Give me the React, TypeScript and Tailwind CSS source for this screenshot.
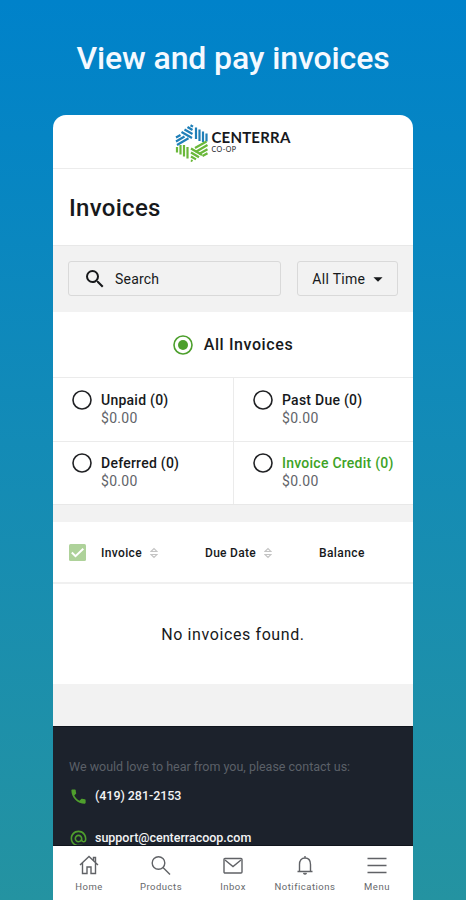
import React from 'react';
import type { ReactNode } from 'react';
import { MdAlternateEmail, MdArrowDropDown, MdPhone, MdSearch } from 'react-icons/md';

const filters = [
    { label: 'Unpaid (0)', amount: '$0.00', credit: false },
    { label: 'Past Due (0)', amount: '$0.00', credit: false },
    { label: 'Deferred (0)', amount: '$0.00', credit: false },
    { label: 'Invoice Credit (0)', amount: '$0.00', credit: true },
];

function Logo() {
    return (
        <div className="flex items-center">
            <svg width="34" height="38" viewBox="0 0 34 38" fill="none" strokeWidth="2.200">
                <g stroke="#1f7fb8">
                    {/* Top */}
                    <path d="M6.500 8L17 14M9.500 5.500L17.500 10M12.500 3L17.500 6M15.500 1.200L18 2.600" />
                    {/* Upper right */}
                    <path d="M21 3.500V15M24.500 5.500V17M28 7.500V18M31.500 9.500V17.500" />
                    {/* Upper left */}
                    <path d="M1 13.500L5.500 11M1 17.500L9.500 12.500M2 21L13.500 14.300" />
                </g>
                <g stroke="#6ab83a">
                    <path d="M2 23V28.500M5.500 21V30.500M9 21V32.500M12.500 23V34.500" />
                    <path d="M20 24L31.500 17.500M20.500 28L32.500 21M24 30L32.500 25.200M27.500 32L32.500 29.200" />
                    <path d="M16 24.500L27 31M16 28.500L24 33.200M16 32.500L21 35.400M16 36.300L17.500 37.200" />
                </g>
            </svg>
            <div className="ml-[2px] flex flex-col font-['Lato',sans-serif] text-[#17191d]">
                <span className="text-[15px] font-bold leading-[18px] tracking-[0.2px]">CENTERRA</span>
                <span className="-mt-px mb-[3px] text-[7px] leading-[9px] tracking-[0.5px]">CO-OP</span>
            </div>
        </div>
    );
}

function Radio({ checked = false }: { checked?: boolean }) {
    return (
        <svg width="20" height="20" viewBox="0 0 20 20" fill="none" className="shrink-0">
            <circle cx="10" cy="10" r="9" stroke={checked ? '#4c9f2c' : '#202124'} strokeWidth="1.6" />
            {checked && <circle cx="10" cy="10" r="5" fill="#4c9f2c" />}
        </svg>
    );
}

function SortIcon() {
    return (
        <svg width="8" height="12" viewBox="0 0 8 12" fill="none" stroke="#c4c4c4" strokeWidth="1.200">
            <path d="M1 4.500L4 1.500L7 4.500ZM1 7.500L4 10.500L7 7.500Z" />
        </svg>
    );
}

function NavItem({ label, children }: { label: string; children: ReactNode }) {
    return (
        <a className="flex w-[72px] flex-col items-center">
            <svg width="22" height="22" viewBox="0 0 22 22" fill="none" stroke="#606266" strokeWidth="1.400">
                {children}
            </svg>
            <span className="mt-1 text-[9.5px] leading-[14px] tracking-[0.5px] text-[#66686b]">{label}</span>
        </a>
    );
}

export default function App() {
    return (
        <div className="flex h-[900px] w-[466px] flex-col items-center overflow-hidden bg-linear-to-b from-[#0082ca] to-[#2493a1] font-['Roboto',sans-serif] text-[#17191b]">
            <h1 className="flex h-[115px] shrink-0 items-center whitespace-nowrap text-[32px] font-medium tracking-[-0.12px] text-[#f4f9ff]">
                View and pay invoices
            </h1>

            <main className="flex h-[785px] w-[360px] flex-col overflow-hidden rounded-t-[13px] bg-white">
                <header className="flex h-[54px] shrink-0 items-center justify-center border-b border-[#ececec] pt-0.5">
                    <Logo />
                </header>

                <div className="flex h-[76px] shrink-0 items-center px-4 pt-0.5">
                    <h2 className="text-2xl font-medium tracking-[0.3px]">Invoices</h2>
                </div>

                {/* Search and period */}
                <div className="flex h-[67px] shrink-0 gap-4 border-t border-[#e8e8e8] bg-[#f2f2f2] px-[15px] pt-[15px]">
                    <div className="flex h-[35px] w-[214px] items-center rounded-[3px] border border-[#d9d9d9] pl-[14px] text-sm tracking-[0.2px]">
                        <MdSearch className="mr-2 size-6" />
                        Search
                    </div>
                    <button className="flex h-[35px] w-[101px] items-center rounded-[3px] border border-[#d9d9d9] pl-[14px] text-sm tracking-[0.3px]">
                        All Time
                        <MdArrowDropDown className="ml-[2px] size-[22px]" />
                    </button>
                </div>

                <div className="flex h-[65px] shrink-0 items-center justify-center gap-[11px] text-base font-medium tracking-[0.6px]">
                    <Radio checked />
                    All Invoices
                </div>

                <div className="grid shrink-0 grid-cols-[181px_179px] grid-rows-[64px_63px]">
                    {filters.map((filter, index) => (
                        <div
                            key={filter.label}
                            className={`flex border-t border-[#ebebeb] pl-[19px] ${index % 2 === 0 ? 'border-r' : ''} ${index < 2 ? 'pt-3' : 'pt-[11px]'}`}
                        >
                            <Radio />
                            <div className="ml-[9px] whitespace-nowrap">
                                <p className={`text-sm font-medium leading-5 tracking-[0.25px] ${filter.credit ? 'text-[#3da326]' : ''}`}>
                                    {filter.label}
                                </p>
                                <p className="text-sm leading-[17px] tracking-[0.3px] text-[#626469]">{filter.amount}</p>
                            </div>
                        </div>
                    ))}
                </div>
                <div className="h-[18px] shrink-0 border-t border-[#e8e8e8] bg-[#f2f2f2]" />

                {/* Invoice table */}
                <div className="flex h-[62px] shrink-0 items-center border-b-2 border-[#f0f0f0] pl-4 pt-px text-xs font-medium">
                    <svg width="17" height="17" viewBox="0 0 17 17" fill="none">
                        <rect width="17" height="17" rx="1.500" fill="#aed29a" />
                        <path d="M2.800 8.500L6.500 12.200L14.300 4.700" stroke="white" strokeWidth="2" />
                    </svg>
                    <div className="ml-[15px] flex w-[104px] items-center gap-2 tracking-[0.35px]">Invoice <SortIcon /></div>
                    <div className="flex w-[114px] items-center gap-2 tracking-[0.3px]">Due Date <SortIcon /></div>
                    <div className="tracking-[0.4px]">Balance</div>
                </div>
                <p className="flex h-[100px] shrink-0 items-center justify-center pt-0.5 text-base tracking-[0.6px]">
                    No invoices found.
                </p>
                <div className="h-[42px] shrink-0 bg-[#f2f2f2]" />

                {/* Contact */}
                <footer className="h-[120px] shrink-0 overflow-hidden border-y border-[#10151d] bg-[#1c222c] px-4 pt-8">
                    <p className="whitespace-nowrap text-[12.5px] leading-4 text-[#5b6068]">
                        We would love to hear from you, please contact us:
                    </p>
                    <div className="mt-3 flex h-[18px] items-center gap-[7px] text-[12.5px] font-medium tracking-[-0.05px] text-[#f2f3f4]">
                        <MdPhone className="size-[19px] text-[#4f9f2d]" />
                        (419) 281-2153
                    </div>
                    <div className="mt-6 flex h-[18px] items-center gap-[7px] text-[12.5px] font-medium tracking-[-0.02px] text-[#f2f3f4]">
                        <MdAlternateEmail className="size-[19px] text-[#4f9f2d]" />
                        support@centerracoop.com
                    </div>
                </footer>

                <nav className="flex h-[54px] shrink-0 pt-2">
                    <NavItem label="Home">
                        <path d="M2 11L11 2.500L20 11M4.500 9V19.500H9V13H13V19.500H17.500V9M15.500 6.500V3.500H17.500V8.500" />
                    </NavItem>
                    <NavItem label="Products">
                        <circle cx="8.500" cy="9" r="6.300" />
                        <path d="M13 13.500L20 20.500" />
                    </NavItem>
                    <NavItem label="Inbox">
                        <rect x="2" y="4.500" width="18" height="14.500" rx="1" />
                        <path d="M3 6L11 12.500L19 6" />
                    </NavItem>
                    <NavItem label="Notifications">
                        <path d="M3.500 17.500H18.500M5.500 17.500V10.500C5.500 6.500 7.500 4 11 4S16.500 6.500 16.500 10.500V17.500M11 4V2M9.500 19Q11 21 12.500 19" />
                    </NavItem>
                    <NavItem label="Menu">
                        <path d="M1.500 4.500H20.500M1.500 11.500H20.500M1.500 18.500H20.500" strokeWidth="1.600" />
                    </NavItem>
                </nav>
            </main>
        </div>
    );
}
